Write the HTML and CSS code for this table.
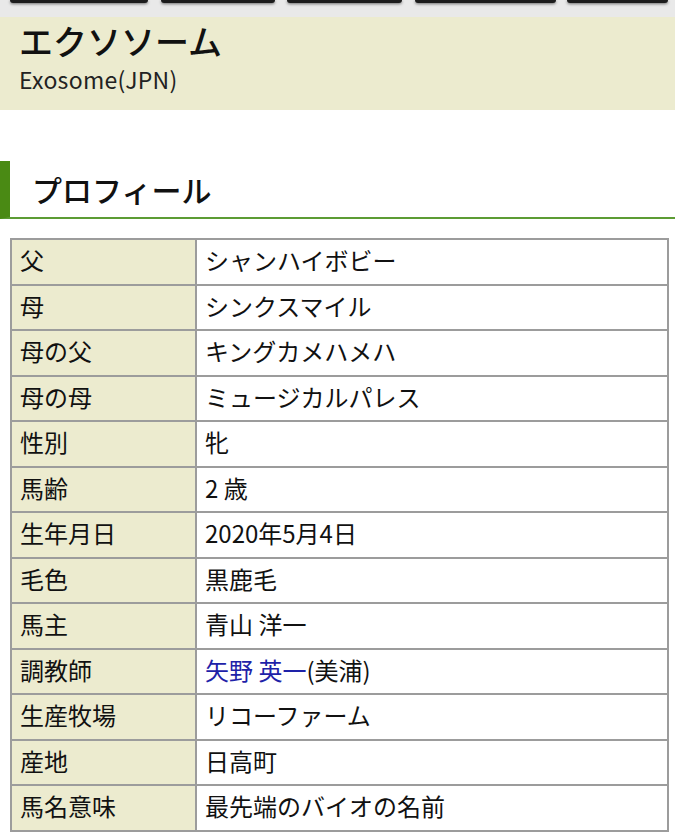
FILE: index.html
```html
<!DOCTYPE html>
<html lang="ja">
<head>
<meta charset="utf-8">
<link rel="stylesheet" href="styles.css">
</head>
<body>
<nav class="tabs">
  <span class="tab t1"></span>
  <span class="tab t2"></span>
  <span class="tab t3"></span>
  <span class="tab t4"></span>
  <span class="tab t5"></span>
</nav>
<header class="horse">
  <h1 class="horse-name">エクソソーム</h1>
  <p class="horse-en">Exosome(JPN)</p>
</header>
<h2 class="section-title">プロフィール</h2>
<div class="table-wrap">
<table class="profile">
  <tr><th>父</th><td>シャンハイボビー</td></tr>
  <tr><th>母</th><td>シンクスマイル</td></tr>
  <tr><th>母の父</th><td>キングカメハメハ</td></tr>
  <tr><th>母の母</th><td>ミュージカルパレス</td></tr>
  <tr><th>性別</th><td>牝</td></tr>
  <tr><th>馬齢</th><td>2 歳</td></tr>
  <tr><th>生年月日</th><td>2020年5月4日</td></tr>
  <tr><th>毛色</th><td>黒鹿毛</td></tr>
  <tr><th>馬主</th><td>青山 洋一</td></tr>
  <tr><th>調教師</th><td><a class="link" href="#">矢野 英一</a>(美浦)</td></tr>
  <tr><th>生産牧場</th><td>リコーファーム</td></tr>
  <tr><th>産地</th><td>日高町</td></tr>
  <tr><th>馬名意味</th><td>最先端のバイオの名前</td></tr>
</table>
</div>
</body>
</html>
```
FILE: styles.css
```css
html, body {
  margin: 0;
  padding: 0;
  background: #fff;
  color: #111;
  font-family: "Noto Sans CJK JP", "Noto Sans", sans-serif;
}
.tabs {
  display: flex;
  height: 17px;
  padding: 0 7px 0 10px;
  background: #e9e9e9;
  overflow: hidden;
  box-sizing: border-box;
}
.tab {
  display: block;
  height: 3px;
  background: #1c1c1c;
  border-radius: 0 0 4px 4px;
  box-shadow: 0 1px 3px rgba(0,0,0,0.55);
}
.t1 { width: 138px; margin-right: 13px; }
.t2 { width: 115px; margin-right: 12px; }
.t3 { width: 115px; margin-right: 13px; }
.t4 { width: 142px; margin-right: 11px; }
.t5 { width: 101px; }
.horse {
  background: #ecebcf;
  padding: 2px 19px 0;
  height: 93px;
  box-sizing: border-box;
}
.horse-name {
  margin: 0;
  font-size: 34px;
  line-height: 44px;
  font-weight: 500;
  color: #111;
}
.horse-en {
  margin: 3px 0 0;
  font-size: 23px;
  line-height: 26px;
  color: #222;
  font-weight: 400;
  letter-spacing: 0.3px;
}
.section-title {
  margin: 51px 0 19px;
  height: 56px;
  line-height: 56px;
  font-size: 30px;
  font-weight: 500;
  padding-left: 22px;
  border-left: 10px solid #4a8a14;
  border-bottom: 2px solid #5c9c34;
  color: #111;
}
.table-wrap {
  padding: 0 6px 0 10px;
}
.profile {
  width: 100%;
  border-collapse: collapse;
  border: 2px solid #9c9c9c;
  font-size: 24px;
}
.profile th, .profile td {
  border: 2px solid #9c9c9c;
  line-height: 33.5px;
  padding: 3px 8px 7px;
  text-align: left;
  font-weight: 400;
  color: #111;
}
.profile th {
  width: 167px;
  background: #ecebcf;
}
.profile td {
  background: #fff;
}
.link {
  color: #1e22a8;
  text-decoration: none;
}
```
